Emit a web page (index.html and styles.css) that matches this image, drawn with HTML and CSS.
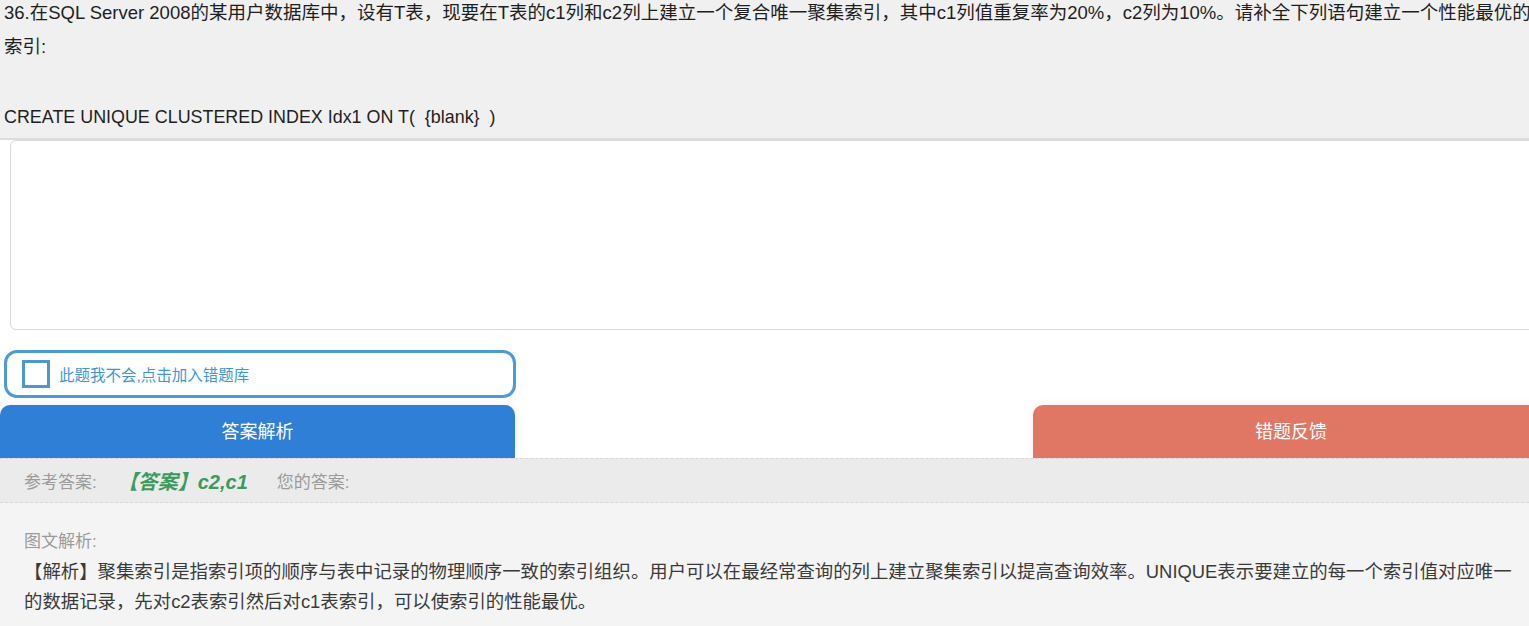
FILE: index.html
```html
<!DOCTYPE html>
<html lang="zh-CN">
<head>
<meta charset="utf-8">
<title>36</title>
<link rel="stylesheet" href="styles.css">
</head>
<body>
<div class="page">
  <section class="stem">
    <p class="q">36.在SQL Server 2008的某用户数据库中，设有T表，现要在T表的c1列和c2列上建立一个复合唯一聚集索引，其中c1列值重复率为20%，c2列为10%。请补全下列语句建立一个性能最优的索引:</p>
    <p class="q empty"></p>
    <p class="q sql">CREATE UNIQUE CLUSTERED INDEX Idx1 ON T(&nbsp; {blank}&nbsp; )</p>
  </section>
  <div class="input-wrap"><textarea class="answer-input"></textarea></div>
  <label class="wrong-box"><span class="cb"></span><span class="wrong-text">此题我不会,点击加入错题库</span></label>
  <div class="btn-row">
    <button class="btn btn-blue">答案解析</button>
    <span class="btn-gap"></span>
    <button class="btn btn-red">错题反馈</button>
  </div>
  <div class="ans-bar">
    <span class="ans-label">参考答案:</span>
    <span class="ans-right">【答案】c2,c1</span>
    <span class="ans-label">您的答案:</span>
  </div>
  <div class="analysis">
    <p class="an-title">图文解析:</p>
    <p class="an-text">【解析】聚集索引是指索引项的顺序与表中记录的物理顺序一致的索引组织。用户可以在最经常查询的列上建立聚集索引以提高查询效率。UNIQUE表示要建立的每一个索引值对应唯一的数据记录，先对c2表索引然后对c1表索引，可以使索引的性能最优。</p>
  </div>
</div>
</body>
</html>
```
FILE: styles.css
```css
html, body {
  margin: 0;
  padding: 0;
  overflow: hidden;
  background: #ffffff;
}
body {
  font-family: "Liberation Sans", "Noto Sans CJK SC", sans-serif;
  width: 1529px;
  height: 626px;
}
p { margin: 0; }
.page {
  width: 1549px;
  display: flex;
  flex-direction: column;
}
.stem {
  background: #f0f0f0;
  margin-top: -4px;
  padding: 0 4px 4px 4px;
  border-bottom: 2px solid #dcdcdc;
}
.q {
  font-size: 18.5px;
  line-height: 34px;
  color: #1e1e1e;
  width: 1531px;
}
.empty { height: 34px; }
.sql {
  margin-top: 2px;
  font-size: 17.9px;
}
.input-wrap {
  padding: 0 0 0 10px;
  background: #fff;
}
.answer-input {
  display: block;
  width: 1560px;
  height: 190px;
  box-sizing: border-box;
  border: 1px solid #d9d9d9;
  border-radius: 6px;
  resize: none;
  background: #fff;
  margin: 0;
}
.wrong-box {
  margin: 20px 0 0 4px;
  width: 512px;
  height: 48px;
  box-sizing: border-box;
  border: 3px solid #4c9bd6;
  border-radius: 13px;
  display: flex;
  align-items: center;
  gap: 9px;
  padding-left: 15px;
  background: #fff;
}
.cb {
  width: 28px;
  height: 28px;
  box-sizing: border-box;
  border: 3px solid #4a97d1;
  background: #fff;
}
.wrong-text {
  font-size: 15.5px;
  color: #3f97d2;
}
.btn-row {
  margin-top: 7px;
  display: grid;
  grid-template-columns: 515px 518px 516px;
}
.btn {
  height: 53px;
  border: none;
  border-radius: 10px 10px 0 0;
  font-family: "Liberation Sans", "Noto Sans CJK SC", sans-serif;
  font-size: 18px;
  color: #ffffff;
  padding: 0 0 3px 0;
  box-shadow: 0 0 10px rgba(0, 0, 0, 0.08);
}
.btn-blue { background: #2f7fd6; }
.btn-red { background: #e07764; }
.ans-bar {
  height: 45px;
  box-sizing: border-box;
  background: #ebebeb;
  border-top: 1px dashed #d6d6d6;
  border-bottom: 1px dashed #d6d6d6;
  display: flex;
  align-items: center;
  padding-left: 24px;
  font-size: 17px;
}
.ans-label { color: #9a9a9a; }
.ans-right {
  color: #3a9b5c;
  font-weight: bold;
  font-style: italic;
  font-size: 20px;
  margin: 0 29px 0 21px;
}
.analysis {
  background: #f4f4f4;
  padding: 24px 24px 40px 24px;
}
.an-title {
  font-size: 17px;
  line-height: 30px;
  color: #9a9a9a;
}
.an-text {
  font-size: 18.4px;
  line-height: 30px;
  color: #3a3a3a;
  width: 1495px;
}
```
